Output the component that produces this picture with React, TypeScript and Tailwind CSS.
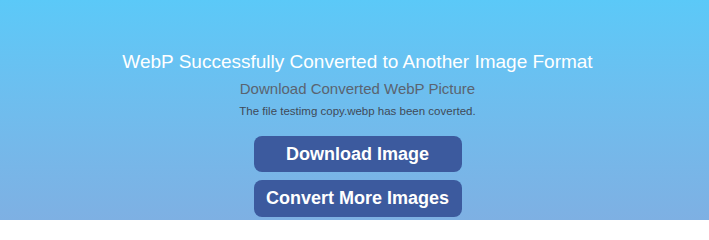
export default function App() {
  return (
    <div className="w-[709px] h-[220px] overflow-hidden bg-gradient-to-b from-[#5bc9f8] to-[#7eb0e3] flex flex-col items-center pl-[6px] font-['Liberation_Sans',Arial,sans-serif]">
      <h1 className="mt-[50px] text-[19px] leading-[24px] text-white">WebP Successfully Converted to Another Image Format</h1>
      <h2 className="mt-[5px] text-[15px] leading-[20px] text-[#5a6470]">Download Converted WebP Picture</h2>
      <p className="mt-[5px] text-[11.5px] leading-[14px] text-[#3f4a58]">The file testimg copy.webp has been coverted.</p>
      <div className="mt-[18px] flex flex-col gap-[8px]">
        <button className="w-[208px] h-[36px] rounded-[8px] bg-[#3c5a9e] text-white font-bold text-[18px]">Download Image</button>
        <button className="w-[208px] h-[37px] rounded-[8px] bg-[#3c5a9e] text-white font-bold text-[18px]">Convert More Images</button>
      </div>
    </div>
  );
}
